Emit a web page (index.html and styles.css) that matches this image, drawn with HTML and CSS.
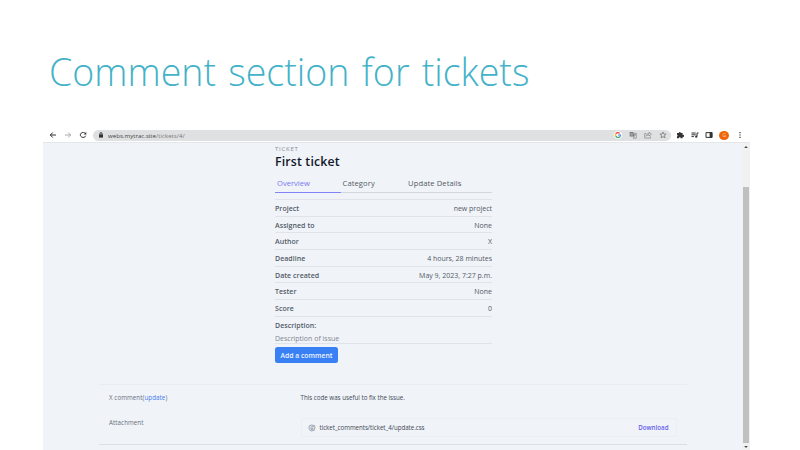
FILE: index.html
```html
<!DOCTYPE html>
<html lang="en">
<head>
<meta charset="utf-8">
<title>Comment section for tickets</title>
<link rel="stylesheet" href="styles.css">
</head>
<body>
<h1 class="slide-title">Comment section for tickets</h1>
<div class="browser">
  <header class="toolbar">
    <svg class="nav" viewBox="0 0 8 8"><path d="M7 4H1.3M3.8 1.5L1.3 4l2.5 2.5"/></svg>
    <svg class="nav muted" viewBox="0 0 8 8"><path d="M1 4h5.7M4.2 1.5L6.7 4 4.2 6.5"/></svg>
    <svg class="nav" viewBox="0 0 8 8"><path d="M6.5 2.6A2.8 2.5 0 1 0 6.8 4.7"/><path class="solid" d="M7.3 1v2.6H4.6z"/></svg>
    <div class="address">
      <svg class="lock" viewBox="0 0 6 6"><path class="solid" d="M1 2.4h4v3.2H1z"/><path d="M2 2.5V1.6a1 1 0 0 1 2 0v.9"/></svg>
      <span class="url">webs.mytrac.site<span class="path">/tickets/4/</span></span>
      <div class="address-icons">
        <svg viewBox="0 0 8 8"><circle class="disc" cx="4" cy="4" r="3.8"/><g stroke-width="1.2"><path stroke="#ea4335" d="M1.8 3A2.4 2.4 0 0 1 5.7 2.3"/><path stroke="#fbbc05" d="M1.8 3a2.4 2.4 0 0 0 0 2"/><path stroke="#34a853" d="M1.8 5a2.4 2.4 0 0 0 3.9.8"/><path stroke="#4285f4" d="M4 4h2.4a2.4 2.4 0 0 1-.7 1.8"/></g></svg>
        <svg viewBox="0 0 8 8"><path class="solid" d="M.7 1h3.5l1.4 4.6H.7z"/><path stroke-width=".6" d="M4.8 2.3h2.5v4.9H4.1l1.2-1.6M5 3.6h1.9M6.5 3.6L5.2 5.3"/><path stroke="#ddd" stroke-width=".6" d="M3.6 2.7a1 1 0 1 0 0 1.3H2.8"/></svg>
        <svg viewBox="0 0 8 8"><path stroke-width=".6" d="M2.5 2.5H.7v4.6h5.8V5.5M2.2 5.2C2.4 3.5 3.5 2.7 5 2.7V1.2l2.4 2.1L5 5V3.9c-1.1 0-2 .3-2.8 1.3z"/></svg>
        <svg viewBox="0 0 8 8"><path stroke-width=".8" d="M4 1l.9 2 2.2.2-1.7 1.4.6 2.2L4 5.6 2 6.8l.6-2.2L.9 3.2 3.1 3z"/></svg>
      </div>
    </div>
    <div class="actions">
      <svg viewBox="0 0 8 8"><path class="solid" d="M1 2.1h1.8a1 1 0 1 1 2 0h1.8v1.8a1 1 0 1 1 0 1.8v1.6H4.8a1 1 0 0 0-2 0H1V5.5a1 1 0 0 0 0-1.8z"/></svg>
      <svg viewBox="0 0 8 8"><path d="M.5 2h4.2M.5 3.8h4.2M.5 5.6h2.4M6 5.6V2h1.6"/><circle class="solid" cx="5.2" cy="5.7" r="1.1"/></svg>
      <svg viewBox="0 0 8 8"><path d="M1 1.6h6v4.8H1z"/><path class="solid" d="M4.6 1.3h2.7v5.4H4.6z"/></svg>
      <span class="avatar">G</span>
      <svg viewBox="0 0 8 8"><path class="solid" d="M3.4 1h1.2v1.2H3.4zM3.4 3.4h1.2v1.2H3.4zM3.4 5.8h1.2V7H3.4z"/></svg>
    </div>
  </header>
  <div class="viewport">
    <main class="page">
      <section class="ticket">
        <p class="eyebrow">TICKET</p>
        <h2>First ticket</h2>
        <nav class="tabs"><a class="active">Overview</a><a>Category</a><a>Update Details</a></nav>
        <dl class="details">
          <div><dt>Project</dt><dd>new project</dd></div>
          <div><dt>Assigned to</dt><dd>None</dd></div>
          <div><dt>Author</dt><dd>X</dd></div>
          <div><dt>Deadline</dt><dd>4 hours, 28 minutes</dd></div>
          <div><dt>Date created</dt><dd>May 9, 2023, 7:27 p.m.</dd></div>
          <div><dt>Tester</dt><dd>None</dd></div>
          <div><dt>Score</dt><dd>0</dd></div>
          <div class="last"><dt>Description:</dt></div>
        </dl>
        <p class="description">Description of issue</p>
        <button class="add">Add a comment</button>
      </section>
      <section class="comment">
        <div class="entry"><span class="label">X comment(<a>update</a>)</span><span class="message">This code was useful to fix the issue.</span></div>
        <div class="entry attachment"><span class="label">Attachment</span>
          <div class="file">
            <svg viewBox="0 0 8 8"><path d="M1 2.2L3.2 1l3.3.6L7 3 6.2 6.3 3 7 1.3 5.7zM2.4 3l3.5-.4M2.4 4.3h3.2M2.8 5.5l2.4-.2"/></svg>
            <span class="filename">ticket_comments/ticket_4/update.css</span><a>Download</a>
          </div>
        </div>
      </section>
    </main>
    <div class="scrollbar">
      <svg viewBox="0 0 8 6"><path d="M2.2 4L4 2l1.8 2z"/></svg>
      <div class="thumb"></div>
      <svg viewBox="0 0 8 6"><path d="M2.2 2L4 4l1.8-2z"/></svg>
    </div>
  </div>
</div>
</body>
</html>
```
FILE: styles.css
```css
* { box-sizing: border-box; }
body { margin: 0; width: 800px; height: 450px; overflow: hidden; background: #fff; font-family: "Open Sans", "Noto Sans", sans-serif; }
p, h1, h2, dl, dd { margin: 0; }
svg { display: block; flex: none; fill: none; stroke: currentColor; stroke-width: 1; }
.solid { fill: currentColor; stroke: none; }
.disc { fill: #fff; stroke: none; }

.slide-title { height: 128px; padding: 43px 0 0 49px; font-size: 39px; line-height: 56px; font-weight: 300; color: #43b2c8; white-space: nowrap; word-spacing: 2.5px; transform: scaleX(.963); transform-origin: 49px 0; }
.browser { width: 707px; height: 322px; margin-left: 43px; }

.toolbar { display: flex; align-items: center; height: 15px; padding-left: 6px; border-bottom: 1px solid #e4e6e9; color: #333; }
.nav { width: 8px; height: 8px; margin-right: 7px; }
.muted { color: #aaa; }
.address { display: flex; align-items: center; width: 578px; height: 11px; margin-left: -1px; padding: 0 4.5px 0 5px; border-radius: 6px; background: #dfe0e1; }
.lock { width: 6px; height: 6px; }
.url { margin-left: 4px; padding-top: 1px; font-size: 6.1px; line-height: 10px; color: #444; letter-spacing: .02px; }
.path { color: #777; }
.address-icons { display: flex; gap: 6.7px; margin-left: auto; color: #777; }
.address-icons svg, .actions svg { width: 8px; height: 8px; }
.actions { display: flex; align-items: center; gap: 6.3px; margin-left: 5.4px; }
.avatar { width: 10px; height: 9px; border-radius: 50%; background: #ef6507; color: #fbd0ae; font-size: 5px; line-height: 9px; text-align: center; }

.viewport { display: flex; height: 307px; }
.page { width: 699px; background: #f0f3f8; }
.scrollbar { display: flex; flex-direction: column; width: 8px; background: #f1f1f1; }
.scrollbar svg { width: 8px; height: 6px; margin-top: 1px; fill: #444; stroke: none; }
.thumb { width: 6px; height: 256px; margin: 37px 0 0 1px; background: #c0c0c0; }

.ticket { width: 217px; height: 221px; margin-left: 232px; font-size: 7px; color: #525a66; }
.eyebrow { padding-top: 2px; font-size: 6px; line-height: 8px; letter-spacing: .75px; color: #858c97; }
.ticket h2 { font-size: 12.3px; line-height: 17px; font-weight: 600; color: #111827; letter-spacing: .17px; }
.tabs { display: flex; height: 23px; padding-top: 8px; border-bottom: 1px solid #d3d8df; }
.tabs a { width: 65.5px; height: 15px; padding-left: 2px; font-size: 7.6px; line-height: 11px; white-space: nowrap; }
.tabs a + a { letter-spacing: .1px; }
.tabs .active { border-bottom: 1px solid #8283f8; color: #7779ef; }
.details { margin-top: 6px; border-top: 1px solid #e0e4ea; }
.details div { display: flex; justify-content: space-between; height: 16.67px; border-bottom: 1px solid #e0e4ea; line-height: 17px; }
.details dt { font-weight: 600; letter-spacing: .05px; }
.details .last { height: 15.3px; border: 0; }
.description { height: 12px; border-bottom: 1px solid #e0e4ea; line-height: 13px; color: #818894; }
.add { display: block; width: 63px; height: 16px; margin-top: 3px; padding: 1px 0 0; border: 0; border-radius: 2.5px; background: #3980f5; color: #eef5ff; font: 600 6.8px/15px "Open Sans", sans-serif; }

.comment { width: 588px; height: 61px; margin: 20px 0 0 56px; border-top: 1px solid #e9edf2; border-bottom: 1px solid #d9dfe7; font-size: 6.2px; color: #414956; }
.entry { display: flex; height: 25px; padding-left: 10px; line-height: 26px; }
.label { width: 191.5px; color: #68707d; font-weight: 500; letter-spacing: .08px; }
.label a { color: #4079ed; }
.attachment { height: 35px; }
.attachment .label { line-height: 25px; }
.file { display: flex; align-items: center; width: 376px; height: 19px; margin-top: 7.5px; padding: 1px 7px 0 6px; border: 1px solid #ebeff4; border-radius: 2px; }
.file svg { width: 8px; height: 8px; color: #8a929e; stroke-width: .8; }
.filename { margin-left: 4px; letter-spacing: -.04px; }
.file a { margin-left: auto; color: #6661ed; font-weight: 600; }
```
